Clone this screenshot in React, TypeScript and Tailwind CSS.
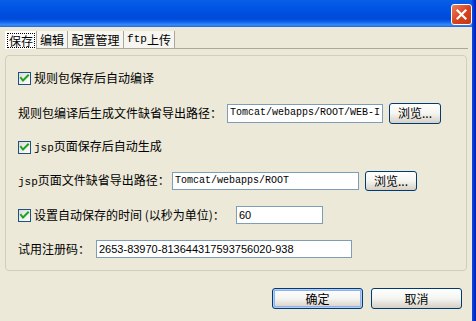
import type { ReactNode } from "react";

const FONT = { fontFamily: '"Noto Sans CJK SC", "Liberation Sans", sans-serif' };

function XpCheck() {
  return (
    <span className="w-[13px] h-[13px] shrink-0 border border-[#1C5180] bg-gradient-to-br from-[#DCDCD7] to-white flex items-center justify-center">
      <svg width="11" height="11" viewBox="0 0 11 11">
        <path d="M2 5 L4 7.5 L9 2.5" fill="none" stroke="#21A121" strokeWidth="2" strokeLinecap="square" />
      </svg>
    </span>
  );
}

function CheckRow({ children }: { children: ReactNode }) {
  return (
    <div className="h-[20px] flex items-center gap-[3px]">
      <XpCheck />
      <span className="leading-none">{children}</span>
    </div>
  );
}

function Field({ value, w, h = "h-[19px]", mono = false }: { value: string; w: string; h?: string; mono?: boolean }) {
  return (
    <div
      className={`${w} ${h} border border-[#7F9DB9] bg-white flex items-center px-[2px] overflow-hidden whitespace-nowrap leading-none ${mono ? "text-[10px]" : "text-[11px]"}`}
      style={{ fontFamily: mono ? '"Liberation Mono", monospace' : '"Liberation Sans", sans-serif' }}
    >
      {value}
    </div>
  );
}

function XpButton({ label, w, h, primary = false }: { label: string; w: string; h: string; primary?: boolean }) {
  return (
    <div
      className={`${w} ${h} rounded-[3px] border border-[#003C74] bg-gradient-to-b from-white via-[#F4F4F0] to-[#D6D0C5] flex items-center justify-center leading-none ${primary ? "shadow-[inset_0_0_0_1px_#B6CCF5,inset_0_0_0_2px_#8FB1EE]" : ""}`}
    >
      {label}
    </div>
  );
}

export default function App() {
  return (
    <div className="w-[476px] h-[321px] bg-[#ECE9D8] flex overflow-hidden text-[12px] text-black" style={FONT}>
      <div className="w-[472px] flex flex-col">
        {/* title bar */}
        <div className="h-[27px] flex justify-end items-start bg-[linear-gradient(to_bottom,#0A5FE6_0%,#0056E6_25%,#0049D8_70%,#1066EE_82%,#3A8BF9_92%,#2466DC_100%)]">
          <div className="mt-[4px] w-[21px] h-[21px] rounded-[3px] border border-white bg-gradient-to-br from-[#E9805E] via-[#D9431C] to-[#C13A16] flex items-center justify-center">
            <svg width="13" height="13" viewBox="0 0 13 13">
              <path d="M2.5 2.5 L10.5 10.5 M10.5 2.5 L2.5 10.5" stroke="white" strokeWidth="2.2" strokeLinecap="square" />
            </svg>
          </div>
        </div>

        <div className="px-[5px] pt-[5px] flex flex-col">
          {/* tabs */}
          <div className="flex items-end h-[17px] border-b border-[#ACA899] w-[463px]">
            <div className="w-[32px] h-[18px] -mb-[1px] bg-white border-l border-white border-r border-r-[#ACA899] flex items-center justify-center">
              <span className="border border-dotted border-black px-[1px] leading-[13px]">保存</span>
            </div>
            <div className="w-[31px] h-[17px] bg-[#F6F5F0] border-r border-[#ACA899] flex items-center justify-center leading-none">编辑</div>
            <div className="w-[56px] h-[17px] bg-[#F6F5F0] border-r border-[#ACA899] flex items-center justify-center leading-none">配置管理</div>
            <div className="w-[51px] h-[17px] bg-[#F6F5F0] border-r border-[#ACA899] flex items-center justify-center leading-none">
              <span style={{ fontFamily: '"Liberation Mono", monospace' }} className="text-[11px]">ftp</span>上传
            </div>
          </div>

          {/* panel */}
          <div className="mt-[6px] w-[462px] h-[216px] rounded-[4px] border border-[#D0CFBF] pl-[12px] pt-[12px] flex flex-col gap-[14px]">
            <div className="mb-[1px]">
              <CheckRow>规则包保存后自动编译</CheckRow>
            </div>
            <div className="h-[20px] flex items-center">
              <span className="w-[209px] leading-none">规则包编译后生成文件缺省导出路径：</span>
              <Field value="Tomcat/webapps/ROOT/WEB-I" w="w-[156px]" mono />
              <div className="ml-[6px]">
                <XpButton label="浏览..." w="w-[52px]" h="h-[21px]" />
              </div>
            </div>
            <CheckRow>
              <span style={{ fontFamily: '"Liberation Mono", monospace' }} className="text-[11px]">jsp</span>页面保存后自动生成
            </CheckRow>
            <div className="h-[20px] flex items-center">
              <span className="w-[154px] leading-none">
                <span style={{ fontFamily: '"Liberation Mono", monospace' }} className="text-[11px]">jsp</span>页面文件缺省导出路径：
              </span>
              <Field value="Tomcat/webapps/ROOT" w="w-[187px]" h="h-[18px]" mono />
              <div className="ml-[6px]">
                <XpButton label="浏览..." w="w-[52px]" h="h-[20px]" />
              </div>
            </div>
            <div className="h-[20px] flex items-center">
              <div className="w-[218px]">
                <CheckRow>设置自动保存的时间 (以秒为单位)：</CheckRow>
              </div>
              <Field value="60" w="w-[87px]" h="h-[18px]" />
            </div>
            <div className="h-[20px] flex items-center">
              <span className="w-[78px] leading-none">试用注册码：</span>
              <Field value="2653-83970-813644317593756020-938" w="w-[256px]" h="h-[18px]" />
            </div>
          </div>

          {/* buttons */}
          <div className="mt-[17px] flex justify-end gap-[8px] pr-[5px]">
            <XpButton label="确定" w="w-[91px]" h="h-[21px]" primary />
            <XpButton label="取消" w="w-[91px]" h="h-[21px]" />
          </div>
        </div>
      </div>
      <div className="w-[4px] bg-[linear-gradient(to_right,#0B4FD6,#0831D9,#0020A8)]" />
    </div>
  );
}
